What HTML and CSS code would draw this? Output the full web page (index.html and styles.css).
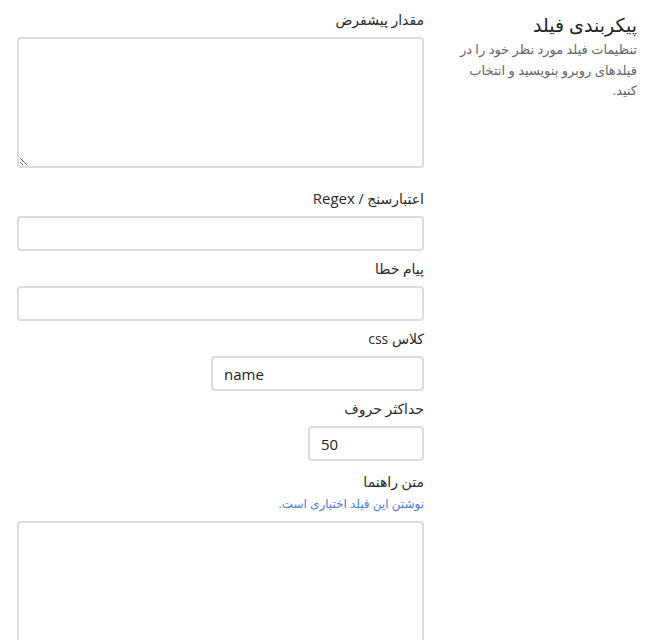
FILE: index.html
```html
<!DOCTYPE html>
<html lang="fa" dir="rtl">
<head>
<meta charset="utf-8">
<title>پیکربندی فیلد</title>
<link rel="stylesheet" href="styles.css">
</head>
<body>
<div class="page">
  <aside class="side">
    <h2 class="side-title">پیکربندی فیلد</h2>
    <p class="side-desc">تنظیمات فیلد مورد نظر خود را در فیلدهای روبرو بنویسید و انتخاب کنید.</p>
  </aside>
  <form class="form">
    <div class="field field-area">
      <label class="label">مقدار پیشفرض</label>
      <textarea class="control area"></textarea>
    </div>
    <div class="field">
      <label class="label">اعتبارسنج / <span class="latin">Regex</span></label>
      <input class="control" type="text">
    </div>
    <div class="field">
      <label class="label">پیام خطا</label>
      <input class="control" type="text">
    </div>
    <div class="field">
      <label class="label">کلاس css</label>
      <input class="control ltr w-md" type="text" value="name">
    </div>
    <div class="field">
      <label class="label">حداکثر حروف</label>
      <input class="control ltr w-sm" type="text" value="50">
    </div>
    <div class="field field-help">
      <label class="label">متن راهنما</label>
      <p class="help">نوشتن این فیلد اختیاری است.</p>
      <textarea class="control area area-tall"></textarea>
    </div>
  </form>
</div>
</body>
</html>
```

FILE: styles.css
```css
html, body {
  margin: 0;
  padding: 0;
  background: #fff;
}
body {
  font-family: "Open Sans", "DejaVu Sans", sans-serif;
  color: #333;
}
.page {
  direction: rtl;
  display: grid;
  grid-template-columns: 185px 407px;
  column-gap: 28px;
  padding: 10px 13px 0 17px;
  align-items: start;
}
.side-title {
  margin: 1px 0 0;
  font-size: 19px;
  font-weight: normal;
  line-height: 28px;
  color: #222;
}
.side-desc {
  margin: 0;
  font-size: 13px;
  line-height: 20.5px;
  color: #666;
}
.form {
  display: flex;
  flex-direction: column;
}
.field {
  display: flex;
  flex-direction: column;
  align-items: flex-start;
  margin-bottom: 8px;
}
.field-area {
  margin-bottom: 21px;
}
.field-help {
  margin-top: 3px;
}
.label {
  font-size: 14px;
  line-height: 20px;
  height: 20px;
  margin-bottom: 7px;
  color: #2a2a2a;
}
.latin {
  font-size: 15px;
  line-height: 1;
}
.control {
  box-sizing: border-box;
  width: 100%;
  height: 35px;
  border: 2px solid #dcdcdc;
  border-radius: 4px;
  background: #fff;
  font-family: "Open Sans", "DejaVu Sans", sans-serif;
  font-size: 15px;
  color: #222;
  padding: 0 11px;
  margin: 0;
  outline: none;
}
.ltr {
  direction: ltr;
  text-align: left;
}
.w-md { width: 213px; }
.w-sm { width: 116px; }
.area {
  display: block;
  height: 131px;
  resize: vertical;
}
.area-tall {
  height: 140px;
}
.help {
  margin: -4px 0 8px;
  font-size: 12px;
  line-height: 18px;
  color: #4a7ee0;
}
```
